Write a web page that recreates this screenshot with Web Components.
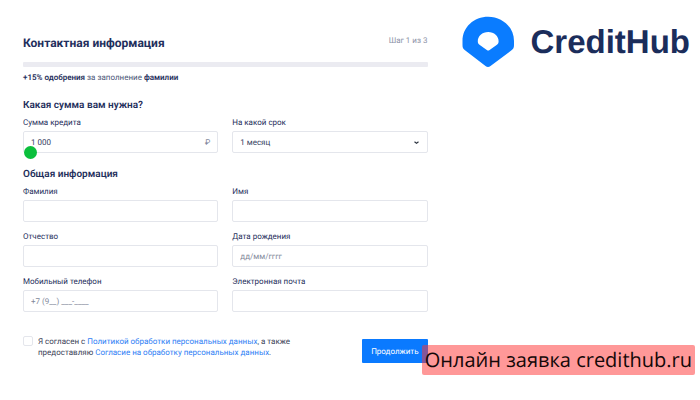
<!DOCTYPE html>
<html lang="ru">
<head>
<meta charset="utf-8">
<meta name="viewport" content="width=device-width, initial-scale=1">
<title>CreditHub</title>
<style>
  body{
    margin: 0;
    background-color: white;
    color: #1f2f5c;
    font-family: Roboto, "Liberation Sans", sans-serif;
    font-size: 8px;
    text-rendering: geometricPrecision;
  }
  b{
    font-weight: 600;
    color: #1f2f5c;
  }
  a{
    color: #2f80f5;
    text-decoration: none;
  }
</style>
</head>
<body>
  <credit-page>
    <credit-form>
      <step-header title-text="Контактная информация" step="Шаг 1 из 3">
        <b>+15% одобрения</b> за заполнение <b>фамилии</b>
      </step-header>

      <form-section heading="Какая сумма вам нужна?">
        <text-field label="Сумма кредита" value="1 000" suffix="₽" slider></text-field>
        <select-field label="На какой срок" options="1 месяц,2 месяца,3 месяца"></select-field>
      </form-section>

      <form-section heading="Общая информация">
        <text-field label="Фамилия"></text-field>
        <text-field label="Имя"></text-field>
        <text-field label="Отчество"></text-field>
        <text-field label="Дата рождения" placeholder="дд/мм/гггг"></text-field>
        <text-field label="Мобильный телефон" placeholder="+7 (9__) ___-____"></text-field>
        <text-field label="Электронная почта"></text-field>
      </form-section>

      <form-footer button="Продолжить">
        Я согласен с <a href="#policy">Политикой обработки персональных данных</a>, а также<br>
        предоставляю <a href="#consent">Согласие на обработку персональных данных</a>.
      </form-footer>
    </credit-form>

    <brand-logo slot="brand">CreditHub</brand-logo>
    <promo-caption slot="caption">Онлайн заявка credithub.ru</promo-caption>
  </credit-page>

<script>
// every element renders its markup once into an open shadow root
class BaseElement extends HTMLElement{
  constructor() {
    super();
    this.attachShadow({mode: 'open'});
  }

  connectedCallback() {
    this.shadowRoot.innerHTML = this.render();
  }

  attr(name) {
    return this.getAttribute(name) || '';
  }
}

// shared by the text and select fields
const fieldStyle = `
  :host{
    display: flex;
    flex-direction: column;
    gap: 3px;
    min-width: 0;
  }
  label{
    line-height: 10px;
  }
  .box{
    position: relative;
    display: flex;
    align-items: center;
    box-sizing: border-box;
    height: 22px;
    border: 1px solid #e4e6ec;
    border-radius: 2px;
    background-color: white;
  }
  input, select{
    flex: 1;
    min-width: 0;
    height: 20px;
    margin: 0;
    padding: 0 7px;
    border: 0;
    outline: none;
    background: none;
    color: #35415f;
    font: inherit;
    text-rendering: inherit;
  }
`;

class CreditPage extends BaseElement{
  render() {
    return `
      <style>
        :host{
          display: grid;
          grid-template-columns: minmax(0, 1fr) auto;
          align-items: start;
          gap: 34px;
          position: relative;
          box-sizing: border-box;
          min-height: 100vh;
          padding: 16px 10px 16px 23px;
        }
        main{
          padding-top: 20px;
        }
      </style>
      <main><slot></slot></main>
      <slot name="brand"></slot>
      <slot name="caption"></slot>
    `;
  }
}

class CreditForm extends BaseElement{
  render() {
    return `
      <style>
        :host{
          display: block;
        }
        form{
          display: flex;
          flex-direction: column;
          gap: 16px;
        }
      </style>
      <form><slot></slot></form>
    `;
  }
}

class StepHeader extends BaseElement{
  render() {
    return `
      <style>
        :host{
          display: block;
        }
        header{
          display: flex;
          justify-content: space-between;
        }
        h1{
          margin: 0;
          font-size: 12px;
          line-height: 14px;
        }
        span{
          color: #8d93a8;
          line-height: 10px;
        }
        .bar{
          height: 5px;
          margin: 12px 0 5px;
          border-radius: 1px;
          background-color: #ebebf1;
        }
        p{
          margin: 0;
          color: #4d5878;
          line-height: 12px;
        }
      </style>
      <header>
        <h1>${this.attr('title-text')}</h1>
        <span>${this.attr('step')}</span>
      </header>
      <div class="bar"></div>
      <p><slot></slot></p>
    `;
  }
}

class FormSection extends BaseElement{
  render() {
    return `
      <style>
        :host{
          display: block;
        }
        h2{
          margin: 0 0 6px;
          font-size: 10px;
          font-weight: 600;
          line-height: 12px;
        }
        div{
          display: grid;
          grid-template-columns: 1fr 1fr;
          gap: 10px 14px;
        }
      </style>
      <h2>${this.attr('heading')}</h2>
      <div><slot></slot></div>
    `;
  }
}

class TextField extends BaseElement{
  render() {
    const suffix = this.hasAttribute('suffix')
      ? `<span class="suffix">${this.attr('suffix')}</span>` : '';
    const thumb = this.hasAttribute('slider')
      ? '<i class="thumb"></i>' : '';

    return `
      <style>
        ${fieldStyle}
        input::placeholder{
          color: #81889a;
          opacity: 1;
        }
        .suffix{
          padding-right: 7px;
          color: #81889a;
        }
        /* slider handle sits over the lower edge of the box */
        .thumb{
          position: absolute;
          left: 0;
          bottom: -7px;
          width: 13px;
          height: 13px;
          border-radius: 50%;
          background-color: #0bbf3c;
        }
      </style>
      <label for="field">${this.attr('label')}</label>
      <div class="box">
        <input id="field" type="text" value="${this.attr('value')}" placeholder="${this.attr('placeholder')}">
        ${suffix}
        ${thumb}
      </div>
    `;
  }
}

class SelectField extends BaseElement{
  render() {
    const options = this.attr('options').split(',')
      .map(option => `<option>${option}</option>`).join('');

    return `
      <style>
        ${fieldStyle}
        select{
          appearance: none;
        }
        svg{
          width: 5px;
          height: 3px;
          margin-right: 8px;
        }
      </style>
      <label for="field">${this.attr('label')}</label>
      <div class="box">
        <select id="field">${options}</select>
        <svg viewBox="0 0 5 3"><path d="M.5 .8 2.500 2.200 4.500 .8" fill="none" stroke="#2d3440" stroke-width="1.2"/></svg>
      </div>
    `;
  }
}

class FormFooter extends BaseElement{
  render() {
    return `
      <style>
        :host{
          display: flex;
          justify-content: space-between;
          align-items: flex-start;
          gap: 16px;
          padding-top: 8px;
        }
        .consent{
          display: flex;
          gap: 5px;
        }
        input{
          appearance: none;
          flex: none;
          width: 10px;
          height: 10px;
          margin: 0;
          border: 1px solid #e4e6ec;
          border-radius: 2px;
        }
        label{
          color: #3c4358;
          line-height: 11px;
        }
        button{
          flex: none;
          height: 24px;
          margin-top: 3px;
          padding: 0 9px;
          border: 0;
          border-radius: 1px;
          background-color: #0a7aff;
          color: white;
          font: inherit;
          text-rendering: inherit;
        }
      </style>
      <div class="consent">
        <input id="agree" type="checkbox">
        <label for="agree"><slot></slot></label>
      </div>
      <button type="button">${this.attr('button')}</button>
    `;
  }
}

class BrandLogo extends BaseElement{
  render() {
    return `
      <style>
        :host{
          display: flex;
          align-items: center;
          gap: 15px;
          color: #1b2d5b;
          font-family: "Liberation Sans", Arial, sans-serif;
          font-size: 33px;
          font-weight: 700;
          line-height: 50px;
        }
        svg{
          width: 54px;
          height: 52px;
        }
      </style>
      <svg viewBox="0 0 54 52" aria-hidden="true">
        <path fill="#0a7cff" fill-rule="evenodd" d="M26.200 .7C12 .7 .5 11 .5 25v4c0 3 .8 4 2.500 5.300L23.500 50c1.600 1.300 3.400 1.300 5 0L49.500 34.300C51.300 33 52 31.800 52 29v-4C52 11 40 .7 26.200 .7ZM26.200 16c-6 0-10.400 4.200-10.400 9.200 0 2 .6 2.700 2 3.800l7 5c1 .7 1.800 .7 2.800 0l7-5c1.400-1.100 2-1.800 2-3.800 0-5-4.400-9.200-10.400-9.200Z"/>
      </svg>
      <span><slot></slot></span>
    `;
  }
}

class PromoCaption extends BaseElement{
  render() {
    return `
      <style>
        :host{
          position: absolute;
          right: 5px;
          top: 345px;
          padding: 0 3px;
          border-radius: 2px;
          background-color: rgba(255, 50, 50, .5);
          color: #140808;
          font-family: "Open Sans", "Noto Sans", sans-serif;
          font-size: 20px;
          line-height: 30px;
          white-space: nowrap;
        }
      </style>
      <slot></slot>
    `;
  }
}

window.customElements.define('credit-page', CreditPage);
window.customElements.define('credit-form', CreditForm);
window.customElements.define('step-header', StepHeader);
window.customElements.define('form-section', FormSection);
window.customElements.define('text-field', TextField);
window.customElements.define('select-field', SelectField);
window.customElements.define('form-footer', FormFooter);
window.customElements.define('brand-logo', BrandLogo);
window.customElements.define('promo-caption', PromoCaption);
</script>
</body>
</html>
